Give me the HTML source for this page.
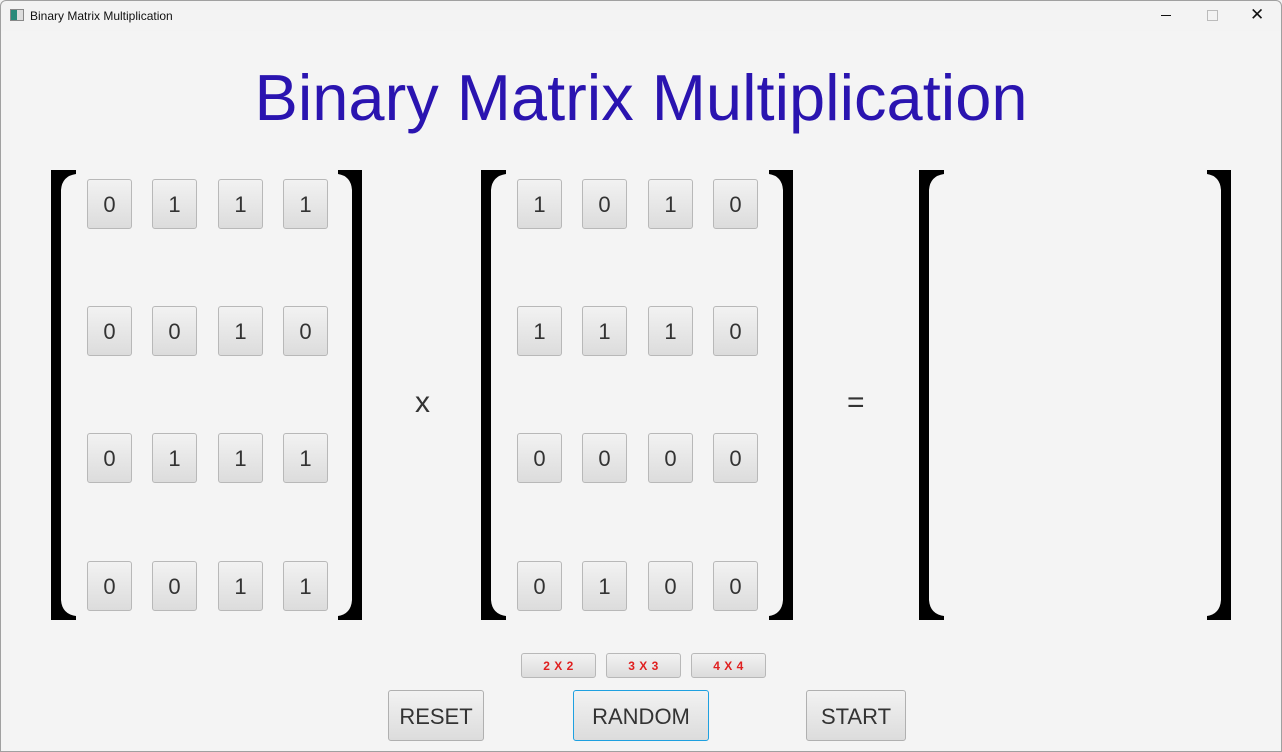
<!DOCTYPE html>
<html><head><style>
body{margin:0;width:1282px;height:752px;background:#f4f4f4;font-family:"Liberation Sans",sans-serif;position:relative;overflow:hidden}
.win{position:absolute;left:0;top:0;width:1280px;height:750px;border:1px solid #a0a0a0;border-radius:6px 6px 0 0}
.tb{position:absolute;left:0;top:0;width:1282px;height:31px;background:#f3f3f3}
.tt{position:absolute;left:30px;top:9px;font-size:12px;color:#111}
.ic{position:absolute;left:10px;top:9px;width:12px;height:10px;border:1px solid #888;background:linear-gradient(90deg,#2a8a7a 50%,#ddd 50%)}
.title{position:absolute;left:0;width:1282px;top:60px;text-align:center;font-size:65px;color:#2a14b0}
.b{position:absolute;width:43px;height:48px;border:1px solid #b8b8b8;border-radius:3px;background:linear-gradient(#f2f2f2,#dcdcdc);font-size:22px;color:#333;text-align:center;line-height:50px}
.s{position:absolute;width:73px;height:23px;top:653px;border:1px solid #b8b8b8;border-radius:3px;background:linear-gradient(#f2f2f2,#dcdcdc);font-size:12px;font-weight:900;color:#e02020;text-align:center;line-height:24px;letter-spacing:0.5px}
.L{position:absolute;top:690px;height:49px;border:1px solid #b0b0b0;border-radius:3px;background:linear-gradient(#f2f2f2,#dcdcdc);font-size:22px;color:#333;text-align:center;line-height:51px}
.op{position:absolute;font-size:30px;color:#333}
</style></head><body>
<div class="tb"><div class="ic"></div><div class="tt">Binary Matrix Multiplication</div>
<div style="position:absolute;left:1161px;top:15px;width:10px;height:1px;background:#111"></div>
<div style="position:absolute;left:1207px;top:10px;width:9px;height:9px;border:1px solid #bbb"></div>
<div style="position:absolute;left:1250px;top:5px;font-size:17px;color:#111">✕</div></div>
<div class="win"></div>
<div class="title">Binary Matrix Multiplication</div>
<svg width="1282" height="752" style="position:absolute;left:0;top:0">
<g fill="#000">
<path d="M51 170H76V174Q62 176 61 190V600Q62 614 76 616V620H51Z"/>
<path d="M362 170H338V174Q351 176 352 190V600Q351 614 338 616V620H362Z"/>
<path d="M481 170H506V174Q492 176 491 190V600Q492 614 506 616V620H481Z"/>
<path d="M793 170H769V174Q782 176 783 190V600Q782 614 769 616V620H793Z"/>
<path d="M919 170H944V174Q930 176 929 190V600Q930 614 944 616V620H919Z"/>
<path d="M1231 170H1207V174Q1220 176 1221 190V600Q1220 614 1207 616V620H1231Z"/>
</g></svg>
<div class="b" style="left:87px;top:179px">0</div><div class="b" style="left:152px;top:179px">1</div><div class="b" style="left:218px;top:179px">1</div><div class="b" style="left:283px;top:179px">1</div>
<div class="b" style="left:87px;top:306px">0</div><div class="b" style="left:152px;top:306px">0</div><div class="b" style="left:218px;top:306px">1</div><div class="b" style="left:283px;top:306px">0</div>
<div class="b" style="left:87px;top:433px">0</div><div class="b" style="left:152px;top:433px">1</div><div class="b" style="left:218px;top:433px">1</div><div class="b" style="left:283px;top:433px">1</div>
<div class="b" style="left:87px;top:561px">0</div><div class="b" style="left:152px;top:561px">0</div><div class="b" style="left:218px;top:561px">1</div><div class="b" style="left:283px;top:561px">1</div>
<div class="b" style="left:517px;top:179px">1</div><div class="b" style="left:582px;top:179px">0</div><div class="b" style="left:648px;top:179px">1</div><div class="b" style="left:713px;top:179px">0</div>
<div class="b" style="left:517px;top:306px">1</div><div class="b" style="left:582px;top:306px">1</div><div class="b" style="left:648px;top:306px">1</div><div class="b" style="left:713px;top:306px">0</div>
<div class="b" style="left:517px;top:433px">0</div><div class="b" style="left:582px;top:433px">0</div><div class="b" style="left:648px;top:433px">0</div><div class="b" style="left:713px;top:433px">0</div>
<div class="b" style="left:517px;top:561px">0</div><div class="b" style="left:582px;top:561px">1</div><div class="b" style="left:648px;top:561px">0</div><div class="b" style="left:713px;top:561px">0</div>
<div class="op" style="left:415px;top:386px">x</div>
<div class="op" style="left:847px;top:386px">=</div>
<div class="s" style="left:521px">2 X 2</div><div class="s" style="left:606px">3 X 3</div><div class="s" style="left:691px">4 X 4</div>
<div class="L" style="left:388px;width:94px">RESET</div>
<div class="L" style="left:573px;width:134px;border-color:#1ea0e0">RANDOM</div>
<div class="L" style="left:806px;width:98px">START</div>
</body></html>
